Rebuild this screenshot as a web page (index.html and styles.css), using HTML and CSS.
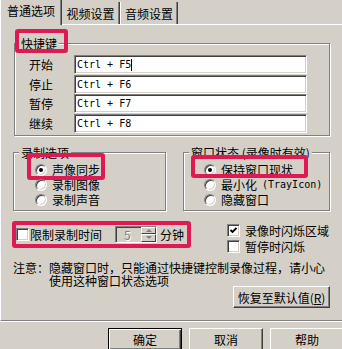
FILE: index.html
```html
<!DOCTYPE html>
<html>
<head>
    <meta charset="UTF-8">
    <title>普通选项</title>
    <link rel="stylesheet" href="styles.css">
</head>
<body>
<div class="dialog">
    <div class="tabs">
        <div class="tab active">普通选项</div>
        <div class="tab">视频设置</div>
        <div class="tab last">音频设置</div>
    </div>

    <div class="panel">
        <fieldset class="group keys">
            <legend><span class="mark mark-keys">快捷键</span></legend>
            <div class="keys-body">
                <div class="key-row"><span class="key-label">开始</span><div class="field">Ctrl + F5<span class="caret"></span></div></div>
                <div class="key-row"><span class="key-label">停止</span><div class="field">Ctrl + F6</div></div>
                <div class="key-row"><span class="key-label">暂停</span><div class="field">Ctrl + F7</div></div>
                <div class="key-row"><span class="key-label">继续</span><div class="field">Ctrl + F8</div></div>
            </div>
        </fieldset>

        <div class="groups">
            <fieldset class="group record">
                <legend>录制选项</legend>
                <div class="radio-body">
                    <label class="radio-row mark mark-record"><span class="radio checked"></span>声像同步</label>
                    <label class="radio-row"><span class="radio"></span>录制图像</label>
                    <label class="radio-row"><span class="radio"></span>录制声音</label>
                </div>
            </fieldset>
            <fieldset class="group window">
                <legend>窗口状态 (录像时有效)</legend>
                <div class="radio-body">
                    <label class="radio-row mark mark-window"><span class="radio checked"></span>保持窗口现状</label>
                    <label class="radio-row"><span class="radio"></span>最小化<span class="latin">(TrayIcon)</span></label>
                    <label class="radio-row"><span class="radio"></span>隐藏窗口</label>
                </div>
            </fieldset>
        </div>

        <div class="options">
            <div class="limit mark mark-limit">
                <span class="check"></span>
                <span class="limit-text">限制录制时间</span>
                <div class="spin">
                    <span class="spin-value">5</span>
                    <div class="spin-btns">
                        <span class="spin-btn"><i class="arrow-up"></i></span>
                        <span class="spin-btn"><i class="arrow-down"></i></span>
                    </div>
                </div>
                <span class="minutes">分钟</span>
            </div>
            <div class="flash">
                <label class="check-row">
                    <span class="check"><svg width="9" height="9" viewBox="0 0 9 9"><polyline points="1.5,4 3.5,6 7.5,2" fill="none" stroke="#000" stroke-width="1.8"/></svg></span>录像时闪烁区域
                </label>
                <label class="check-row"><span class="check"></span>暂停时闪烁</label>
            </div>
        </div>

        <div class="note">
            <span>注意：</span>
            <p>隐藏窗口时，只能通过快捷键控制录像过程，请小心<br>使用这种窗口状态选项</p>
        </div>

        <div class="reset-row">
            <button class="btn reset-btn">恢复至默认值(<u>R</u>)</button>
        </div>
    </div>

    <div class="footer">
        <button class="btn default">确定</button>
        <button class="btn">取消</button>
        <button class="btn">帮助</button>
    </div>
</div>
</body>
</html>
```

FILE: styles.css
```css
body {
    margin: 0;
    background-color: #d4d0c8;
    font-family: "Noto Sans CJK SC", sans-serif;
    font-size: 12px;
    color: #000;
    overflow: hidden;
}

.dialog {
    width: 342px;
    height: 349px;
}

/* tabs */
.tabs {
    display: flex;
    align-items: flex-end;
    height: 24px;
}

.tab {
    box-sizing: border-box;
    width: 58px;
    height: 22px;
    padding-top: 5px;
    line-height: 14px;
    text-align: center;
    border-right: 1px solid #404040;
    box-shadow: inset -1px 0 #808080;
}

.tab.last {
    border-left: 1px solid #fff;
}

.tab.active {
    position: relative;
    z-index: 1;
    width: 62px;
    height: 25px;
    margin-bottom: -1px;
    padding-top: 4px;
    background-color: #d4d0c8;
    border-left: 1px solid #fff;
}

/* panel */
.panel {
    border-top: 1px solid #fff;
    border-left: 1px solid #fff;
    border-bottom: 1px solid #808080;
    box-shadow: 0 1px #fff;
    padding: 11px 0 12px 12px;
}

.group {
    box-sizing: border-box;
    margin: 0;
    padding: 0;
    min-width: 0;
    border: 1px solid #808080;
    box-shadow: inset 1px 1px #fff, 1px 1px #fff;
}

.group legend {
    padding: 0 2px;
    margin-left: 5px;
    line-height: 15px;
    background-color: #d4d0c8;
}

.keys {
    width: 316px;
    margin-left: 1px;
}

.keys legend {
    margin-left: 4px;
}

.keys-body {
    padding: 4px 22px 2px 14px;
}

.key-row {
    display: flex;
    align-items: center;
    height: 19.5px;
}

.key-label {
    width: 45px;
    line-height: 15px;
}

.field {
    box-sizing: border-box;
    flex: 1;
    height: 19px;
    display: flex;
    align-items: center;
    padding-left: 2px;
    background-color: #fff;
    border: 1px solid;
    border-color: #808080 #fff #fff #808080;
    box-shadow: inset 1px 1px #404040, inset -1px -1px #d4d0c8;
    font-family: "DejaVu Sans Mono", monospace;
    font-size: 10px;
    white-space: pre;
}

.caret {
    display: inline-block;
    width: 1px;
    height: 12px;
    background-color: #000;
}

/* highlight marks */
.mark {
    position: relative;
}

.mark::after {
    content: "";
    position: absolute;
    border: 4px solid #de1a52;
    border-radius: 3px;
    pointer-events: none;
}

.mark-keys {
    display: inline-block;
    vertical-align: top;
}

.mark-keys::after {
    left: -6px;
    right: -11px;
    top: -7px;
    bottom: -2px;
}

.mark-record::after {
    left: -8px;
    right: -5px;
    top: -9px;
    bottom: -3px;
}

.mark-window::after {
    left: -13px;
    right: -15px;
    top: -7px;
    bottom: -1px;
}

.mark-limit::after {
    left: -4px;
    right: -7px;
    top: -4px;
    bottom: -5px;
}

/* radio groups */
.groups {
    display: flex;
    gap: 17px;
    margin-top: 9px;
}

.record {
    width: 153px;
}

.window {
    width: 147px;
}

.radio-body {
    padding: 2px 0 3px 21px;
}

.window .radio-body {
    padding-left: 20px;
}

.radio-row {
    display: flex;
    align-items: center;
    gap: 5px;
    width: max-content;
    height: 15px;
}

.radio {
    box-sizing: border-box;
    position: relative;
    width: 12px;
    height: 12px;
    border-radius: 50%;
    background-color: #fff;
    border: 1px solid;
    border-color: #808080 #fff #fff #808080;
    box-shadow: inset 1px 1px #404040, inset -1px -1px #d4d0c8;
}

.radio.checked::before {
    content: "";
    position: absolute;
    left: 3px;
    top: 3px;
    width: 4px;
    height: 4px;
    border-radius: 50%;
    background-color: #000;
}

.latin {
    font-family: "DejaVu Sans Mono", monospace;
    font-size: 10px;
}

/* time limit + flashing */
.options {
    display: flex;
    margin-top: 11px;
}

.limit {
    display: flex;
    align-items: center;
    height: 18px;
    margin: 3px 0 0 3px;
}

.check {
    box-sizing: border-box;
    display: flex;
    align-items: center;
    justify-content: center;
    width: 13px;
    height: 13px;
    background-color: #fff;
    border: 1px solid;
    border-color: #808080 #fff #fff #808080;
    box-shadow: inset 1px 1px #404040, inset -1px -1px #d4d0c8;
}

.limit-text {
    margin-left: 1px;
}

.spin {
    box-sizing: border-box;
    display: flex;
    width: 42px;
    height: 17px;
    margin-left: 13px;
    border: 1px solid;
    border-color: #808080 #fff #fff #808080;
    box-shadow: inset 1px 1px #404040;
}

.spin-value {
    flex: 1;
    padding: 1px 0 0 8px;
    line-height: 14px;
    color: #808080;
    text-shadow: 1px 1px #fff;
}

.spin-btns {
    display: flex;
    flex-direction: column;
    width: 15px;
}

.spin-btn {
    box-sizing: border-box;
    flex: 1;
    display: flex;
    align-items: center;
    justify-content: center;
    border: 1px solid;
    border-color: #fff #404040 #404040 #fff;
}

.arrow-up,
.arrow-down {
    width: 0;
    height: 0;
    border-left: 3px solid transparent;
    border-right: 3px solid transparent;
}

.arrow-up {
    border-bottom: 3px solid #808080;
}

.arrow-down {
    border-top: 3px solid #808080;
}

.minutes {
    margin-left: 3px;
}

.flash {
    margin-left: 43px;
}

.check-row {
    display: flex;
    align-items: center;
    gap: 5px;
    height: 16px;
}

/* note */
.note {
    display: flex;
    margin-top: 7px;
    line-height: 13px;
}

.note p {
    margin: 0;
}

.reset-row {
    display: flex;
    justify-content: flex-end;
    margin: -1px 12px 0 0;
}

/* buttons */
.btn {
    box-sizing: border-box;
    height: 23px;
    padding: 0;
    font-family: "Noto Sans CJK SC", sans-serif;
    font-size: 12px;
    color: #000;
    background-color: #d4d0c8;
    border: 1px solid;
    border-color: #fff #404040 #404040 #fff;
    box-shadow: inset -1px -1px #808080;
}

.reset-btn {
    width: 97px;
    height: 22px;
}

.reset-btn u {
    text-decoration: underline;
}

.footer {
    display: flex;
    gap: 7px;
    padding: 7px 0 0 108px;
}

.footer .btn {
    flex: none;
    width: 74px;
}

.btn.default {
    border-color: #000;
    box-shadow: inset 1px 1px #fff, inset -1px -1px #404040, inset -2px -2px #808080;
}
```
